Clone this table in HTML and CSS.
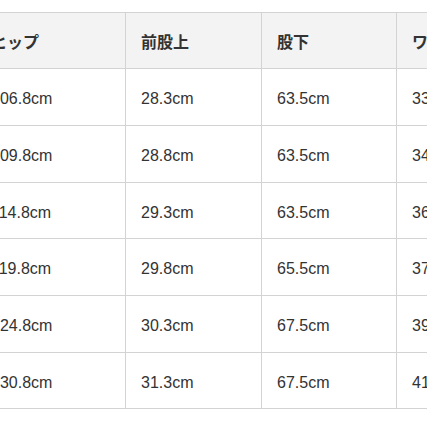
FILE: index.html
```html
<!DOCTYPE html>
<html lang="ja">
<head>
<meta charset="utf-8">
<title>サイズ表</title>
<link rel="stylesheet" href="styles.css">
</head>
<body>
<div class="size-table" role="table">
  <div class="cell head" role="columnheader">ヒップ</div>
  <div class="cell head" role="columnheader">前股上</div>
  <div class="cell head" role="columnheader">股下</div>
  <div class="cell head" role="columnheader">ワタリ</div>

  <div class="cell">106.8cm</div>
  <div class="cell">28.3cm</div>
  <div class="cell">63.5cm</div>
  <div class="cell">33.5cm</div>

  <div class="cell">109.8cm</div>
  <div class="cell">28.8cm</div>
  <div class="cell">63.5cm</div>
  <div class="cell">34.5cm</div>

  <div class="cell">114.8cm</div>
  <div class="cell">29.3cm</div>
  <div class="cell">63.5cm</div>
  <div class="cell">36.0cm</div>

  <div class="cell">119.8cm</div>
  <div class="cell">29.8cm</div>
  <div class="cell">65.5cm</div>
  <div class="cell">37.5cm</div>

  <div class="cell">124.8cm</div>
  <div class="cell">30.3cm</div>
  <div class="cell">67.5cm</div>
  <div class="cell">39.0cm</div>

  <div class="cell">130.8cm</div>
  <div class="cell">31.3cm</div>
  <div class="cell">67.5cm</div>
  <div class="cell">41.0cm</div>
</div>
</body>
</html>
```

FILE: styles.css
```css
html, body {
  margin: 0;
  padding: 0;
  background: #ffffff;
  overflow: hidden;
}

body {
  width: 427px;
  height: 427px;
  font-family: "Liberation Sans", "Noto Sans CJK JP", sans-serif;
  color: #333333;
}

.size-table {
  display: grid;
  grid-template-columns: 149px 135px 134px 150px;
  grid-template-rows: 55px 56px 56px 55px 56px 56px 55px;
  gap: 1px;
  background: #d3d3d3;
  border: 1px solid #d3d3d3;
  margin-top: 12px;
  margin-left: -25px;
  width: max-content;
}

.cell {
  display: flex;
  align-items: center;
  background: #ffffff;
  padding: 4px 15px 0;
  font-size: 16px;
  white-space: nowrap;
  overflow: hidden;
}

.cell.head {
  background: #f3f3f3;
  font-family: "Noto Sans CJK JP", "Liberation Sans", sans-serif;
  font-weight: 700;
  padding-top: 1px;
  color: #333333;
}
```
